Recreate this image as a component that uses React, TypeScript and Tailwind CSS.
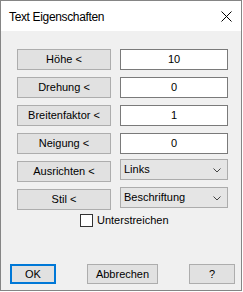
import React from "react";

const font = { fontFamily: '"Liberation Sans", Arial, sans-serif' };

function Btn({ label }: { label: string }) {
  return (
    <div className="w-[94px] h-[21px] shrink-0 bg-[#e1e1e1] border border-[#adadad] flex items-center justify-center text-[11px] text-black leading-none">
      {label}
    </div>
  );
}

function Field({ value }: { value: string }) {
  return (
    <div className="w-[108px] h-[21px] shrink-0 bg-white border border-[#7a7a7a] flex items-center justify-center text-[11px] text-black leading-none">
      {value}
    </div>
  );
}

function Combo({ value }: { value: string }) {
  return (
    <div className="w-[108px] h-[21px] shrink-0 -mt-[2px] bg-[#e5e5e5] border border-[#acacac] flex items-center pl-[3px] pr-[6px] text-[11px] text-black leading-none">
      <span className="flex-1">{value}</span>
      <svg width="8" height="5" viewBox="0 0 8 5" className="mt-[1px]">
        <path d="M0.5 0.5 L4 4 L7.5 0.5" fill="none" stroke="#444" strokeWidth="1" />
      </svg>
    </div>
  );
}

export default function App() {
  const rows: [string, React.ReactNode][] = [
    ["Höhe <", <Field value="10" />],
    ["Drehung <", <Field value="0" />],
    ["Breitenfaktor <", <Field value="1" />],
    ["Neigung <", <Field value="0" />],
    ["Ausrichten <", <Combo value="Links" />],
    ["Stil <", <Combo value="Beschriftung" />],
  ];
  return (
    <div className="w-[243px] h-[292px] bg-white" style={font}>
      <div className="w-[242px] h-[291px] border border-[#858585] flex flex-col">
        <div className="h-[30px] bg-white flex items-center pl-[8px] pr-[9px] shrink-0">
          <span className="flex-1 text-[12px] tracking-[-0.35px] text-black mt-[1px]">Text Eigenschaften</span>
          <svg width="11" height="11" viewBox="0 0 11 11">
            <path d="M0.5 0.5 L10.5 10.5 M10.5 0.5 L0.5 10.5" stroke="#000" strokeWidth="1" />
          </svg>
        </div>
        <div className="flex-1 bg-[#f0f0f0] flex flex-col pt-[18px]">
          <div className="flex flex-col gap-[7px] pl-[16px]">
            {rows.map(([label, right], i) => (
              <div key={i} className="flex gap-[9px] h-[21px]">
                <Btn label={label} />
                {right}
              </div>
            ))}
          </div>
          <div className="flex items-center mt-[4px] pl-[79px] h-[13px]">
            <div className="w-[13px] h-[13px] bg-white border border-[#333333]" />
            <span className="ml-[4px] text-[11px] text-black leading-none">Unterstreichen</span>
          </div>
          <div className="flex mt-[37px] pl-[9px]">
            <div className="w-[46px] h-[20px] bg-[#e1e1e1] border-2 border-[#0078d7] flex items-center justify-center text-[11px] text-black leading-none">
              OK
            </div>
            <div className="ml-[31px] w-[71px] h-[20px] bg-[#e1e1e1] border border-[#adadad] flex items-center justify-center text-[11px] text-black leading-none">
              Abbrechen
            </div>
            <div className="ml-[31px] w-[46px] h-[20px] bg-[#e1e1e1] border border-[#adadad] flex items-center justify-center text-[11px] text-black leading-none">
              ?
            </div>
          </div>
        </div>
      </div>
    </div>
  );
}
